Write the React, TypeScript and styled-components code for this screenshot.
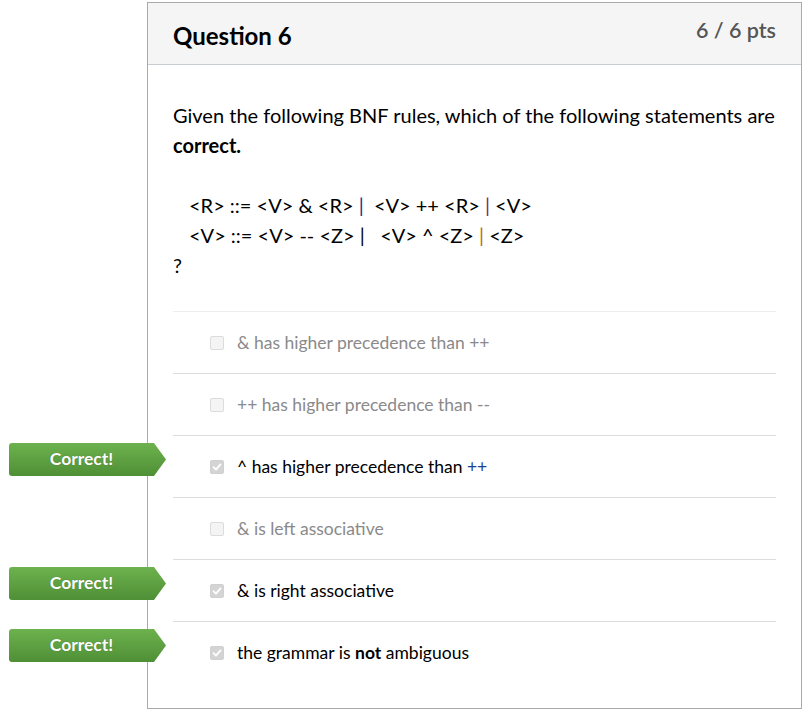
import React from "react";
import styled, { createGlobalStyle } from "styled-components";

const Global = createGlobalStyle`
  html, body { margin: 0; padding: 0; background: #fff; }
  body { font-family: Lato, "Open Sans", "Liberation Sans", sans-serif; color: #2d3b45; }
`;

const Page = styled.div`
  padding: 2px 0 0 147px;
`;

const Card = styled.div`
  width: 653px;
  border: 1px solid #aaa;
  background: #fff;
`;

const Header = styled.div`
  height: 62px;
  background: #f5f5f5;
  border-bottom: 1px solid #c7cdd1;
  display: flex;
  justify-content: space-between;
  padding: 0 25px;
  box-sizing: border-box;
`;

const Title = styled.h2`
  margin: 0;
  align-self: center;
  margin-top: 4px;
  font-size: 24px;
  font-weight: 700;
  color: #000;
`;

const Points = styled.div`
  margin-top: 14px;
  font-size: 21.5px;
  font-weight: 600;
  color: #555;
`;

const Body = styled.div`
  padding: 35px 25px 25px 25px;
`;

const Para = styled.p`
  margin: 0 0 30px 0;
  font-size: 20px;
  line-height: 30px;
  color: #000;
`;

const Code = styled.div<{ $indent?: boolean }>`
  padding-left: ${(p) => (p.$indent ? "16px" : "0")};
  white-space: pre;
`;

const Bar = styled.span<{ $c: string }>`
  color: ${(p) => p.$c};
`;

const List = styled.div`
  margin-top: 31px;
`;

const Row = styled.div<{ $first?: boolean }>`
  position: relative;
  height: 61px;
  border-top: 1px solid ${(p) => (p.$first ? "#eeeeee" : "#dddddd")};
  display: flex;
  align-items: center;
  padding-left: 37px;
  gap: 13px;
`;

const Box = styled.span<{ $checked?: boolean }>`
  width: 14px;
  height: 14px;
  box-sizing: border-box;
  border-radius: 2px;
  border: 1px solid ${(p) => (p.$checked ? "#d0d0d0" : "#dcdcdc")};
  background: ${(p) => (p.$checked ? "#d4d4d4" : "#f4f4f4")};
  display: flex;
  align-items: center;
  justify-content: center;
  flex-shrink: 0;
`;

const Label = styled.span<{ $selected?: boolean }>`
  font-size: 17.5px;
  color: ${(p) => (p.$selected ? "#000" : "#8a8a8a")};
  margin-top: -1px;
`;

const Badge = styled.div`
  position: absolute;
  left: -164px;
  top: 7px;
  width: 157px;
  height: 33px;
  box-sizing: border-box;
  padding-right: 12px;
  background: linear-gradient(#6db24e, #4f8f36);
  clip-path: polygon(0 0, calc(100% - 12px) 0, 100% 50%, calc(100% - 12px) 100%, 0 100%);
  border-radius: 3px 0 0 3px;
  display: flex;
  align-items: center;
  justify-content: center;
  color: #fff;
  font-weight: 700;
  font-size: 17.5px;
  text-shadow: 0 0 1px rgba(0, 0, 0, 0.3);
  padding-bottom: 3px;
`;

const Check = () => (
  <svg width="10" height="10" viewBox="0 0 10 10">
    <path d="M1.5 5.2 L4 7.6 L8.5 2.4" fill="none" stroke="#fff" strokeWidth="1.8" strokeLinecap="round" strokeLinejoin="round" />
  </svg>
);

type Answer = { text: React.ReactNode; checked: boolean; correct: boolean };

const answers: Answer[] = [
  { text: "& has higher precedence than ++", checked: false, correct: false },
  { text: "++ has higher precedence than --", checked: false, correct: false },
  {
    text: (
      <>
        ^ has higher precedence than <Bar $c="#1d3f8f">++</Bar>
      </>
    ),
    checked: true,
    correct: true,
  },
  { text: "& is left associative", checked: false, correct: false },
  { text: "& is right associative", checked: true, correct: true },
  {
    text: (
      <>
        the grammar is <b>not</b> ambiguous
      </>
    ),
    checked: true,
    correct: true,
  },
];

export default function App() {
  return (
    <>
      <Global />
      <Page>
        <Card>
          <Header>
            <Title>Question 6</Title>
            <Points>6 / 6 pts</Points>
          </Header>
          <Body>
            <Para>
              Given the following BNF rules, which of the following statements are <b>correct.</b>
            </Para>
            <Para>
              <Code $indent>
                {"<R> ::= <V> & <R> "}
                <Bar $c="#1a2a8a">|</Bar>
                {"  <V> ++ <R> "}
                <Bar $c="#8a1a6a">|</Bar>
                {" <V>"}
              </Code>
              <Code $indent>
                {"<V> ::= <V> -- <Z> |   <V> ^ <Z> "}
                <Bar $c="#c06a10">|</Bar>
                {" <Z>"}
              </Code>
              <Code>?</Code>
            </Para>
            <List>
              {answers.map((a, i) => (
                <Row key={i} $first={i === 0}>
                  {a.correct && <Badge>Correct!</Badge>}
                  <Box $checked={a.checked}>{a.checked && <Check />}</Box>
                  <Label $selected={a.checked}>{a.text}</Label>
                </Row>
              ))}
            </List>
          </Body>
        </Card>
      </Page>
    </>
  );
}
